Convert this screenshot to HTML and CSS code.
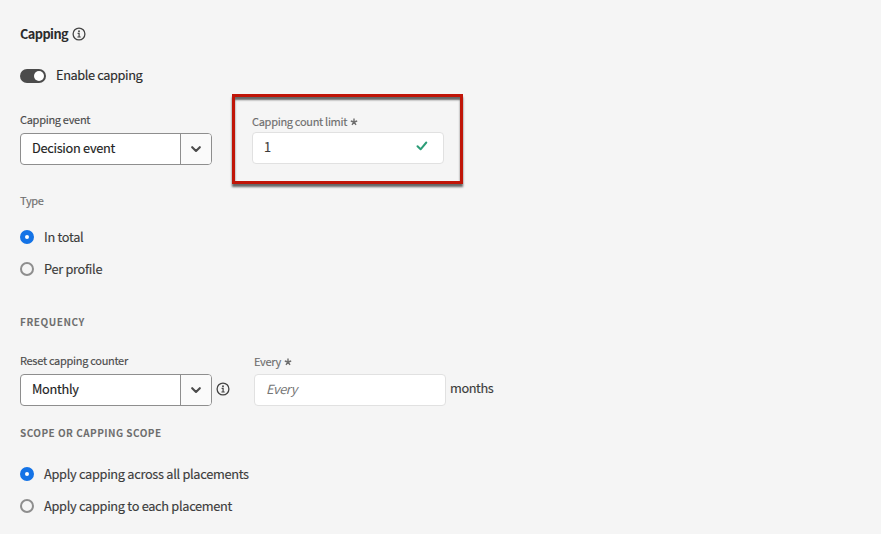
FILE: index.html
```
<!DOCTYPE html>
<html lang="en">
<head>
<meta charset="utf-8">
<title>Capping</title>
<link rel="stylesheet" href="styles.css">
</head>
<body>
<svg width="0" height="0" class="defs">
  <symbol id="info" viewBox="0 0 14 14"><circle cx="7" cy="7" r="5.9" fill="none" stroke="currentColor" stroke-width="1.3"/><circle cx="7" cy="4.2" r=".95" fill="currentColor"/><path d="M5.6 6.4h1.5v3.5M5.4 10h3.3" fill="none" stroke="currentColor" stroke-width="1.2"/></symbol>
  <symbol id="chevron" viewBox="0 0 10 7"><path d="M1.2 1.2 5 5l3.8-3.8" fill="none" stroke="currentColor" stroke-width="2.1" stroke-linecap="round" stroke-linejoin="round"/></symbol>
  <symbol id="star" viewBox="0 0 8 8"><path d="M4 4V.6M4 4l3.2-1M4 4l2 2.8M4 4 2 6.8M4 4 .8 3" fill="none" stroke="currentColor" stroke-width="1.4"/></symbol>
</svg>
<main class="panel">
  <h1 class="title"><span class="t-title">Capping</span><svg class="info"><use href="#info"/></svg></h1>
  <div class="toggle-row"><span class="switch"></span><span class="t-enable">Enable capping</span></div>
  <div class="fields">
    <div class="field">
      <div class="label dark">Capping event</div>
      <div class="select"><span class="value">Decision event</span><span class="arrow"><svg><use href="#chevron"/></svg></span></div>
    </div>
    <div class="highlight">
      <div class="label"><span>Capping count limit</span><svg class="star"><use href="#star"/></svg></div>
      <div class="input"><span>1</span><svg class="check" viewBox="0 0 12 10"><path d="M1.5 5.2 4.6 8.3 10.3 1.5" fill="none" stroke="currentColor" stroke-width="2" stroke-linecap="round" stroke-linejoin="round"/></svg></div>
    </div>
  </div>
  <div class="label type">Type</div>
  <div class="radios">
    <div class="radio"><i class="dot on"></i><span>In total</span></div>
    <div class="radio"><i class="dot"></i><span>Per profile</span></div>
  </div>
  <h2 class="heading frequency">FREQUENCY</h2>
  <div class="fields reset">
    <div class="field">
      <div class="label dark">Reset capping counter</div>
      <div class="select"><span class="value">Monthly</span><span class="arrow"><svg><use href="#chevron"/></svg></span></div>
    </div>
    <svg class="info reset-info"><use href="#info"/></svg>
    <div class="field every">
      <div class="label"><span>Every</span><svg class="star"><use href="#star"/></svg></div>
      <div class="input"><span class="placeholder">Every</span></div>
    </div>
    <span class="months">months</span>
  </div>
  <h2 class="heading scope">SCOPE OR CAPPING SCOPE</h2>
  <div class="radios scope-radios">
    <div class="radio"><i class="dot on"></i><span>Apply capping across all placements</span></div>
    <div class="radio"><i class="dot"></i><span>Apply capping to each placement</span></div>
  </div>
</main>
</body>
</html>
```
FILE: styles.css
```
* { box-sizing: border-box; }
body { margin: 0; background: #f5f5f5; color: #3c3c3c; font: 12.75px/20px "Noto Sans CJK SC", "Noto Sans", sans-serif; letter-spacing: -.29px; white-space: nowrap; -webkit-text-stroke: .15px; }
.defs { position: absolute; }
svg { display: block; flex: none; }
.panel { height: 534px; padding: 24px 20px 0; overflow: hidden; }
.title { display: flex; align-items: center; gap: 4px; height: 20px; margin: 0; font-size: 12.75px; line-height: 20px; font-weight: 700; letter-spacing: -.55px; color: #2c2c2c; -webkit-text-stroke: 0; }
.info { width: 14px; height: 14px; color: #444; }
.toggle-row { display: flex; align-items: center; gap: 10px; height: 20px; margin-top: 22px; color: #2c2c2c; }
.t-enable { margin-top: -2px; letter-spacing: -.38px; }
.switch { display: flex; justify-content: flex-end; width: 26px; height: 14px; padding: 2px; border-radius: 7px; background: #4b4b4b; }
.switch::after { content: ""; width: 10px; height: 10px; border-radius: 50%; background: #fff; }
.fields { display: flex; align-items: flex-start; height: 100px; margin-top: 8px; }
.field { width: 192px; padding-top: 16px; }
.label { display: flex; align-items: center; height: 20px; padding-bottom: 2px; font-size: 11px; line-height: 18px; letter-spacing: -.3px; color: #6e6e6e; }
.dark { height: 23px; padding-bottom: 5px; color: #4b4b4b; }
.star { width: 8px; height: 8px; margin: 2px 0 0 3px; }
.select { display: flex; width: 192px; height: 32px; border: 1px solid #8e8e8e; border-radius: 4px; background: #fff; color: #222; line-height: 27px; overflow: hidden; }
.value { width: 160px; padding-left: 11px; border-right: 1px solid #8e8e8e; }
.arrow { display: flex; flex: 1; align-items: center; justify-content: center; background: #fafafa; color: #4b4b4b; }
.arrow svg { width: 10px; height: 7px; }
.input { display: flex; justify-content: space-between; width: 192px; height: 32px; padding: 0 15px 0 11px; border: 1px solid #e1e1e1; border-radius: 4px; background: #fff; line-height: 28px; }
.highlight { width: 231px; height: 90px; margin-left: 20px; padding: 15px 17px; border: 3px solid #c01508; box-shadow: 0 3px 2px #666, inset 0 3px 2px #666; }
.check { width: 12px; height: 10px; margin-top: 8px; color: #2d9d78; }
.type { margin-top: -3px; }
.radios { margin-top: 10px; }
.radio { display: flex; align-items: center; gap: 10px; height: 32px; }
.dot { width: 14px; height: 14px; border: 2px solid #8e8e8e; border-radius: 50%; }
.on { border: 5px solid #1473e6; background: #fff; }
.heading { height: 20px; margin: 0; font-size: 10px; line-height: 20px; font-weight: 700; color: #6e6e6e; -webkit-text-stroke: 0; }
.frequency { margin-top: 27px; letter-spacing: .55px; }
.reset { height: 71px; margin-top: 3px; }
.reset-info { margin: 47px 24px 0 4px; }
.every .label { height: 23px; padding-bottom: 3px; }
.every .input { line-height: 27px; }
.placeholder { font-style: italic; letter-spacing: -.4px; color: #757575; -webkit-text-stroke: 0; }
.months { margin: 43px 0 0 4px; letter-spacing: -.4px; }
.scope { margin-top: 17px; letter-spacing: .46px; }
.scope-radios { margin-top: 15px; }
```
